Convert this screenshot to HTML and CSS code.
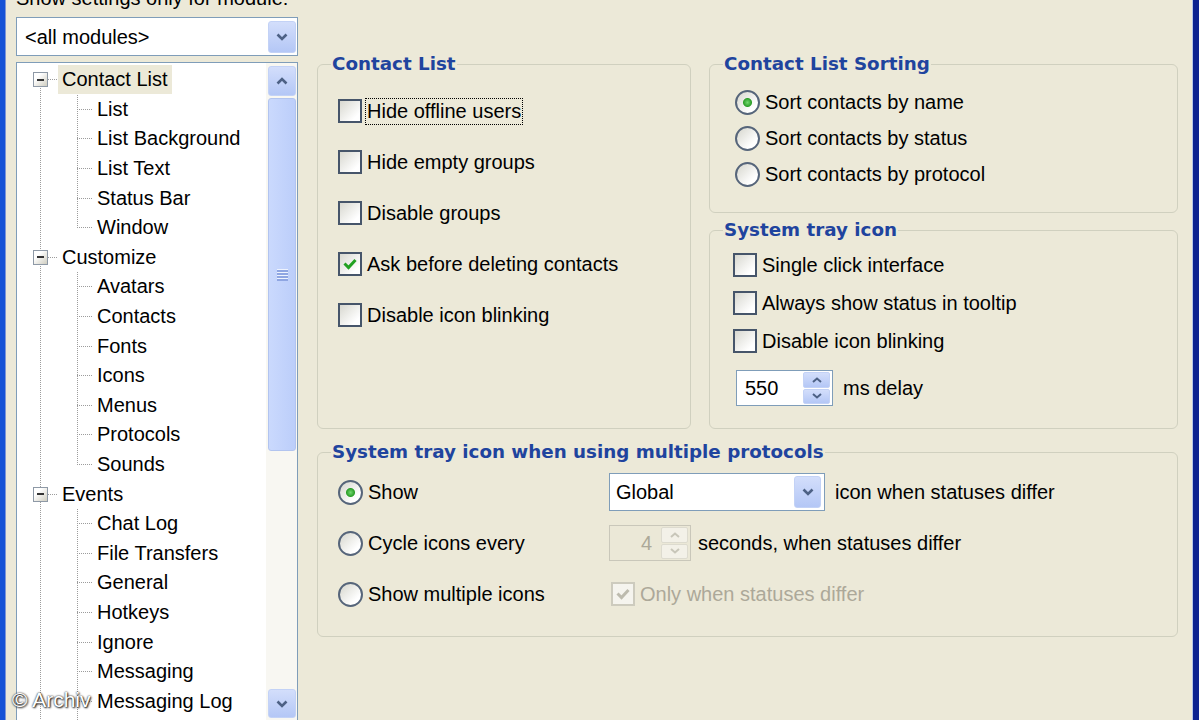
FILE: index.html
```html
<!DOCTYPE html>
<html lang="en">
<head>
    <meta charset="UTF-8">
    <meta name="viewport" content="width=device-width, initial-scale=1.0">
    <title>Options - Contact List</title>
    <link rel="stylesheet" href="styles.css">
</head>
<body>

    <div class="window">
        <div class="sidebar">
            <p class="sidebar__caption">Show settings only for module:</p>
            <div class="combo">
                <span class="combo__value">&lt;all modules&gt;</span>
                <span class="combo__button">
                    <svg width="12" height="8" viewBox="0 0 12 8"><path d="M1.5 1.5 6 6l4.5-4.5" fill="none" stroke="#4d6185" stroke-width="2.6"/></svg>
                </span>
            </div>

            <div class="tree-box">
                <ul class="tree">
                    <li>
                        <div class="tree__row tree__row--parent"><span class="tree__toggle"></span><span class="tree__label is-selected">Contact List</span></div>
                        <ul class="tree__children">
                            <li class="tree__row tree__row--child"><span class="tree__label">List</span></li>
                            <li class="tree__row tree__row--child"><span class="tree__label">List Background</span></li>
                            <li class="tree__row tree__row--child"><span class="tree__label">List Text</span></li>
                            <li class="tree__row tree__row--child"><span class="tree__label">Status Bar</span></li>
                            <li class="tree__row tree__row--child"><span class="tree__label">Window</span></li>
                        </ul>
                    </li>
                    <li>
                        <div class="tree__row tree__row--parent"><span class="tree__toggle"></span><span class="tree__label">Customize</span></div>
                        <ul class="tree__children">
                            <li class="tree__row tree__row--child"><span class="tree__label">Avatars</span></li>
                            <li class="tree__row tree__row--child"><span class="tree__label">Contacts</span></li>
                            <li class="tree__row tree__row--child"><span class="tree__label">Fonts</span></li>
                            <li class="tree__row tree__row--child"><span class="tree__label">Icons</span></li>
                            <li class="tree__row tree__row--child"><span class="tree__label">Menus</span></li>
                            <li class="tree__row tree__row--child"><span class="tree__label">Protocols</span></li>
                            <li class="tree__row tree__row--child"><span class="tree__label">Sounds</span></li>
                        </ul>
                    </li>
                    <li>
                        <div class="tree__row tree__row--parent"><span class="tree__toggle"></span><span class="tree__label">Events</span></div>
                        <ul class="tree__children tree__children--more">
                            <li class="tree__row tree__row--child"><span class="tree__label">Chat Log</span></li>
                            <li class="tree__row tree__row--child"><span class="tree__label">File Transfers</span></li>
                            <li class="tree__row tree__row--child"><span class="tree__label">General</span></li>
                            <li class="tree__row tree__row--child"><span class="tree__label">Hotkeys</span></li>
                            <li class="tree__row tree__row--child"><span class="tree__label">Ignore</span></li>
                            <li class="tree__row tree__row--child"><span class="tree__label">Messaging</span></li>
                            <li class="tree__row tree__row--child"><span class="tree__label">Messaging Log</span></li>
                        </ul>
                    </li>
                </ul>
                <div class="scrollbar">
                    <span class="scrollbar__button">
                        <svg width="12" height="8" viewBox="0 0 12 8"><path d="M1.5 6.5 6 2l4.5 4.5" fill="none" stroke="#4d6185" stroke-width="2.6"/></svg>
                    </span>
                    <span class="scrollbar__thumb"><span class="scrollbar__grip"></span></span>
                    <span class="scrollbar__track"></span>
                    <span class="scrollbar__button scrollbar__button--down">
                        <svg width="12" height="8" viewBox="0 0 12 8"><path d="M1.5 1.5 6 6l4.5-4.5" fill="none" stroke="#4d6185" stroke-width="2.6"/></svg>
                    </span>
                </div>
            </div>
        </div>

        <div class="content">
            <fieldset class="group group--list">
                <legend class="group__title">Contact List</legend>
                <div class="group__body">
                    <div class="opt"><span class="check"></span><span class="opt__text has-focus">Hide offline users</span></div>
                    <div class="opt"><span class="check"></span><span class="opt__text">Hide empty groups</span></div>
                    <div class="opt"><span class="check"></span><span class="opt__text">Disable groups</span></div>
                    <div class="opt">
                        <span class="check check--on"><svg width="20" height="20" viewBox="0 0 20 20"><path d="M4.5 9.5 8.5 13.5 15.5 6" fill="none" stroke="#21a121" stroke-width="3"/></svg></span>
                        <span class="opt__text">Ask before deleting contacts</span>
                    </div>
                    <div class="opt"><span class="check"></span><span class="opt__text">Disable icon blinking</span></div>
                </div>
            </fieldset>

            <div class="column">
                <fieldset class="group group--sort">
                    <legend class="group__title">Contact List Sorting</legend>
                    <div class="group__body">
                        <div class="opt"><span class="radio radio--on"></span><span class="opt__text">Sort contacts by name</span></div>
                        <div class="opt"><span class="radio"></span><span class="opt__text">Sort contacts by status</span></div>
                        <div class="opt"><span class="radio"></span><span class="opt__text">Sort contacts by protocol</span></div>
                    </div>
                </fieldset>

                <fieldset class="group group--tray">
                    <legend class="group__title">System tray icon</legend>
                    <div class="group__body">
                        <div class="opt"><span class="check"></span><span class="opt__text">Single click interface</span></div>
                        <div class="opt"><span class="check"></span><span class="opt__text">Always show status in tooltip</span></div>
                        <div class="opt"><span class="check"></span><span class="opt__text">Disable icon blinking</span></div>
                        <div class="inline inline--delay">
                            <div class="spin">
                                <span class="spin__value">550</span>
                                <span class="spin__buttons">
                                    <span class="spin__btn"><svg width="10" height="6" viewBox="0 0 10 6"><path d="M1 5 5 1.5 9 5" fill="none" stroke="#4d6185" stroke-width="2"/></svg></span>
                                    <span class="spin__btn"><svg width="10" height="6" viewBox="0 0 10 6"><path d="M1 1 5 4.5 9 1" fill="none" stroke="#4d6185" stroke-width="2"/></svg></span>
                                </span>
                            </div>
                            <span>ms delay</span>
                        </div>
                    </div>
                </fieldset>
            </div>

            <fieldset class="group group--wide">
                <legend class="group__title">System tray icon when using multiple protocols</legend>
                <div class="group__body">
                    <div class="opt"><span class="radio radio--on"></span><span class="opt__text">Show</span></div>
                    <div class="inline">
                        <div class="combo combo--small">
                            <span class="combo__value">Global</span>
                            <span class="combo__button">
                                <svg width="12" height="8" viewBox="0 0 12 8"><path d="M1.5 1.5 6 6l4.5-4.5" fill="none" stroke="#4d6185" stroke-width="2.6"/></svg>
                            </span>
                        </div>
                        <span>icon when statuses differ</span>
                    </div>

                    <div class="opt"><span class="radio"></span><span class="opt__text">Cycle icons every</span></div>
                    <div class="inline inline--tight">
                        <div class="spin spin--disabled">
                            <span class="spin__value">4</span>
                            <span class="spin__buttons">
                                <span class="spin__btn"><svg width="10" height="6" viewBox="0 0 10 6"><path d="M1 5 5 1.5 9 5" fill="none" stroke="#c8c6b9" stroke-width="2"/></svg></span>
                                <span class="spin__btn"><svg width="10" height="6" viewBox="0 0 10 6"><path d="M1 1 5 4.5 9 1" fill="none" stroke="#c8c6b9" stroke-width="2"/></svg></span>
                            </span>
                        </div>
                        <span>seconds, when statuses differ</span>
                    </div>

                    <div class="opt"><span class="radio"></span><span class="opt__text">Show multiple icons</span></div>
                    <div class="opt opt--disabled">
                        <span class="check check--disabled"><svg width="20" height="20" viewBox="0 0 20 20"><path d="M4.5 9.5 8.5 13.5 15.5 6" fill="none" stroke="#bdbbae" stroke-width="3"/></svg></span>
                        <span class="opt__text">Only when statuses differ</span>
                    </div>
                </div>
            </fieldset>
        </div>

        <span class="watermark">&copy; Archiv</span>
    </div>

</body>
</html>
```

FILE: styles.css
```css
* {
    box-sizing: border-box;
}

body {
    margin: 0;
    background: #ece9d8;
    color: #000;
    font-family: "Liberation Sans", Arial, sans-serif;
    font-size: 20px;
    line-height: 23px;
    overflow: hidden;
}

.window {
    position: relative;
    display: flex;
    height: 720px;
    padding-left: 16px;
    overflow: hidden;
    box-shadow: inset 5px 0 0 #1652d6, inset 6px 0 0 #7d96d6, inset -6px 0 0 #0c2390, inset -7px 0 0 #b4c6e6;
}

/* left column */

.sidebar {
    width: 282px;
    flex-shrink: 0;
    display: flex;
    flex-direction: column;
}

.sidebar > * {
    flex-shrink: 0;
}

.sidebar__caption {
    margin: -13px 0 0;
    white-space: nowrap;
}

.combo {
    display: flex;
    height: 39px;
    margin-top: 7px;
    padding: 3px 1px 2px 8px;
    border: 1px solid #7f9db9;
    background: #fff;
}

.combo__value {
    flex: 1;
    align-self: center;
    white-space: nowrap;
}

.combo__button,
.scrollbar__button,
.spin__btn {
    display: flex;
    align-items: center;
    justify-content: center;
    border: 1px solid #c3d2f6;
    border-radius: 3px;
    background: linear-gradient(#d3defb, #b4c7f6);
}

.combo__button {
    width: 28px;
}

.tree-box {
    display: flex;
    height: 660px;
    margin-top: 6px;
    border: 1px solid #7f9db9;
    background: #fff;
}

.tree {
    flex: 1;
    margin: 0;
    padding: 2px 0 0;
    list-style: none;
    background: repeating-linear-gradient(to bottom, #9c9c9c 0 1px, transparent 1px 2px) no-repeat 23px 17px / 1px calc(100% - 17px);
}

.tree__row {
    display: flex;
    align-items: center;
    height: 29.6px;
}

.tree__row--parent {
    padding-left: 16px;
    background: repeating-linear-gradient(to right, #9c9c9c 0 1px, transparent 1px 2px) no-repeat 31px 50% / 10px 1px;
}

.tree__row--child {
    padding-left: 76px;
    background: repeating-linear-gradient(to right, #9c9c9c 0 1px, transparent 1px 2px) no-repeat 60px 50% / 16px 1px;
}

.tree__toggle {
    width: 15px;
    height: 15px;
    margin-right: 10px;
    border: 1px solid #8e99a6;
    background: linear-gradient(#333, #333) no-repeat center / 7px 2px, linear-gradient(135deg, #fff 30%, #cfcdc0);
}

.tree__label {
    padding: 0 4px;
    line-height: 29px;
    white-space: nowrap;
}

.tree__label.is-selected {
    background: #ece9d8;
}

.tree__children {
    margin: 0;
    padding: 0;
    list-style: none;
    background: repeating-linear-gradient(to bottom, #9c9c9c 0 1px, transparent 1px 2px) no-repeat 60px 0 / 1px calc(100% - 15px);
}

.tree__children--more {
    min-height: 240px;
    background-size: 1px 100%;
}

.scrollbar {
    width: 31px;
    display: flex;
    flex-direction: column;
    padding: 3px 1px 3px 2px;
    background: #f8f7f2;
}

.scrollbar > * {
    flex-shrink: 0;
}

.scrollbar__button {
    height: 30px;
}

.scrollbar__button--down {
    height: 29px;
}

.scrollbar__thumb {
    display: flex;
    align-items: center;
    justify-content: center;
    height: 353px;
    margin-top: 2px;
    border: 1px solid #b2c4ef;
    border-radius: 3px;
    background: linear-gradient(to right, #cad9fd, #bccefa);
}

.scrollbar__grip {
    width: 11px;
    height: 12px;
    background: repeating-linear-gradient(to bottom, #eef3fe 0 1.5px, #8fa6e2 1.5px 3px);
}

.scrollbar__track {
    flex: 1 1 auto;
}

/* right side */

.content {
    display: grid;
    grid-template-columns: 374px 469px;
    column-gap: 18px;
    row-gap: 12px;
    align-content: start;
    margin-left: 19px;
    padding-top: 53px;
}

.column {
    display: flex;
    flex-direction: column;
    gap: 6px;
}

.group {
    min-width: 0;
    margin: 0;
    padding: 0;
    border: 1px solid #d0d0bf;
    border-radius: 6px;
}

.group__title {
    margin-left: 13px;
    padding: 0 1px;
    color: #1f449e;
    font-family: "DejaVu Sans", sans-serif;
    font-weight: bold;
    font-size: 18.3px;
    line-height: 22px;
    white-space: nowrap;
}

.group__body {
    display: flex;
    flex-direction: column;
}

.group--list .group__body {
    padding: 23px 20px;
    gap: 25px;
}

.group--sort .group__body {
    padding: 14px 25px 25px;
    gap: 10px;
}

.group--tray .group__body {
    padding: 11px 23px 22px;
    gap: 12px;
}

.group--wide {
    grid-column: 1 / -1;
}

.group--wide .group__body {
    display: grid;
    grid-template-columns: 271px auto;
    grid-auto-rows: 38px;
    row-gap: 13px;
    align-items: center;
    padding: 10px 20px 23px;
}

.opt {
    display: flex;
    align-items: center;
    gap: 5px;
    height: 26px;
    white-space: nowrap;
}

.opt__text.has-focus {
    outline: 1px dotted #000;
    outline-offset: 1px;
}

.opt--disabled {
    margin-left: 2px;
    color: #aca899;
}

.check {
    display: flex;
    align-items: center;
    justify-content: center;
    width: 24px;
    height: 24px;
    flex-shrink: 0;
    border: 2px solid #46556a;
    background: linear-gradient(135deg, #d8d8d0, #fff 80%);
}

.check--disabled {
    border-color: #cdcbbe;
    background: #f5f4ee;
}

.radio {
    width: 25px;
    height: 25px;
    flex-shrink: 0;
    border: 2px solid #56657a;
    border-radius: 50%;
    background: linear-gradient(135deg, #d6d6cd, #fff 75%);
}

.radio--on {
    background: radial-gradient(circle, #72d86f 0, #2d9f2a 4px, transparent 5px), linear-gradient(135deg, #d6d6cd, #fff 75%);
}

.inline {
    display: flex;
    align-items: center;
    gap: 10px;
    white-space: nowrap;
}

.inline--tight {
    gap: 7px;
}

.inline--delay {
    margin: 4px 0 0 3px;
}

.combo--small {
    width: 216px;
    height: 38px;
    margin-top: 0;
    padding: 2px 3px 2px 6px;
}

.combo--small .combo__button {
    width: 27px;
}

.spin {
    display: flex;
    width: 97px;
    height: 36px;
    padding: 1px 2px 1px 0;
    border: 1px solid #7f9db9;
    background: #fff;
}

.spin__value {
    flex: 1;
    align-self: center;
    padding-left: 8px;
}

.spin__buttons {
    width: 27px;
    display: flex;
    flex-direction: column;
    gap: 1px;
}

.spin__btn {
    flex: 1;
    border-radius: 2px;
}

.spin--disabled {
    width: 82px;
    border-color: #c9c7ba;
    background: #ebe8d7;
}

.spin--disabled .spin__value {
    padding: 0 9px 0 0;
    text-align: right;
    color: #aca899;
}

.spin--disabled .spin__btn {
    border-color: #dddbcf;
    background: #f3f1e8;
}

.watermark {
    position: absolute;
    left: 12px;
    top: 688px;
    color: #fff;
    font-size: 21px;
    text-shadow: 0 0 2px #000, 1px 1px 2px #222;
}
```
